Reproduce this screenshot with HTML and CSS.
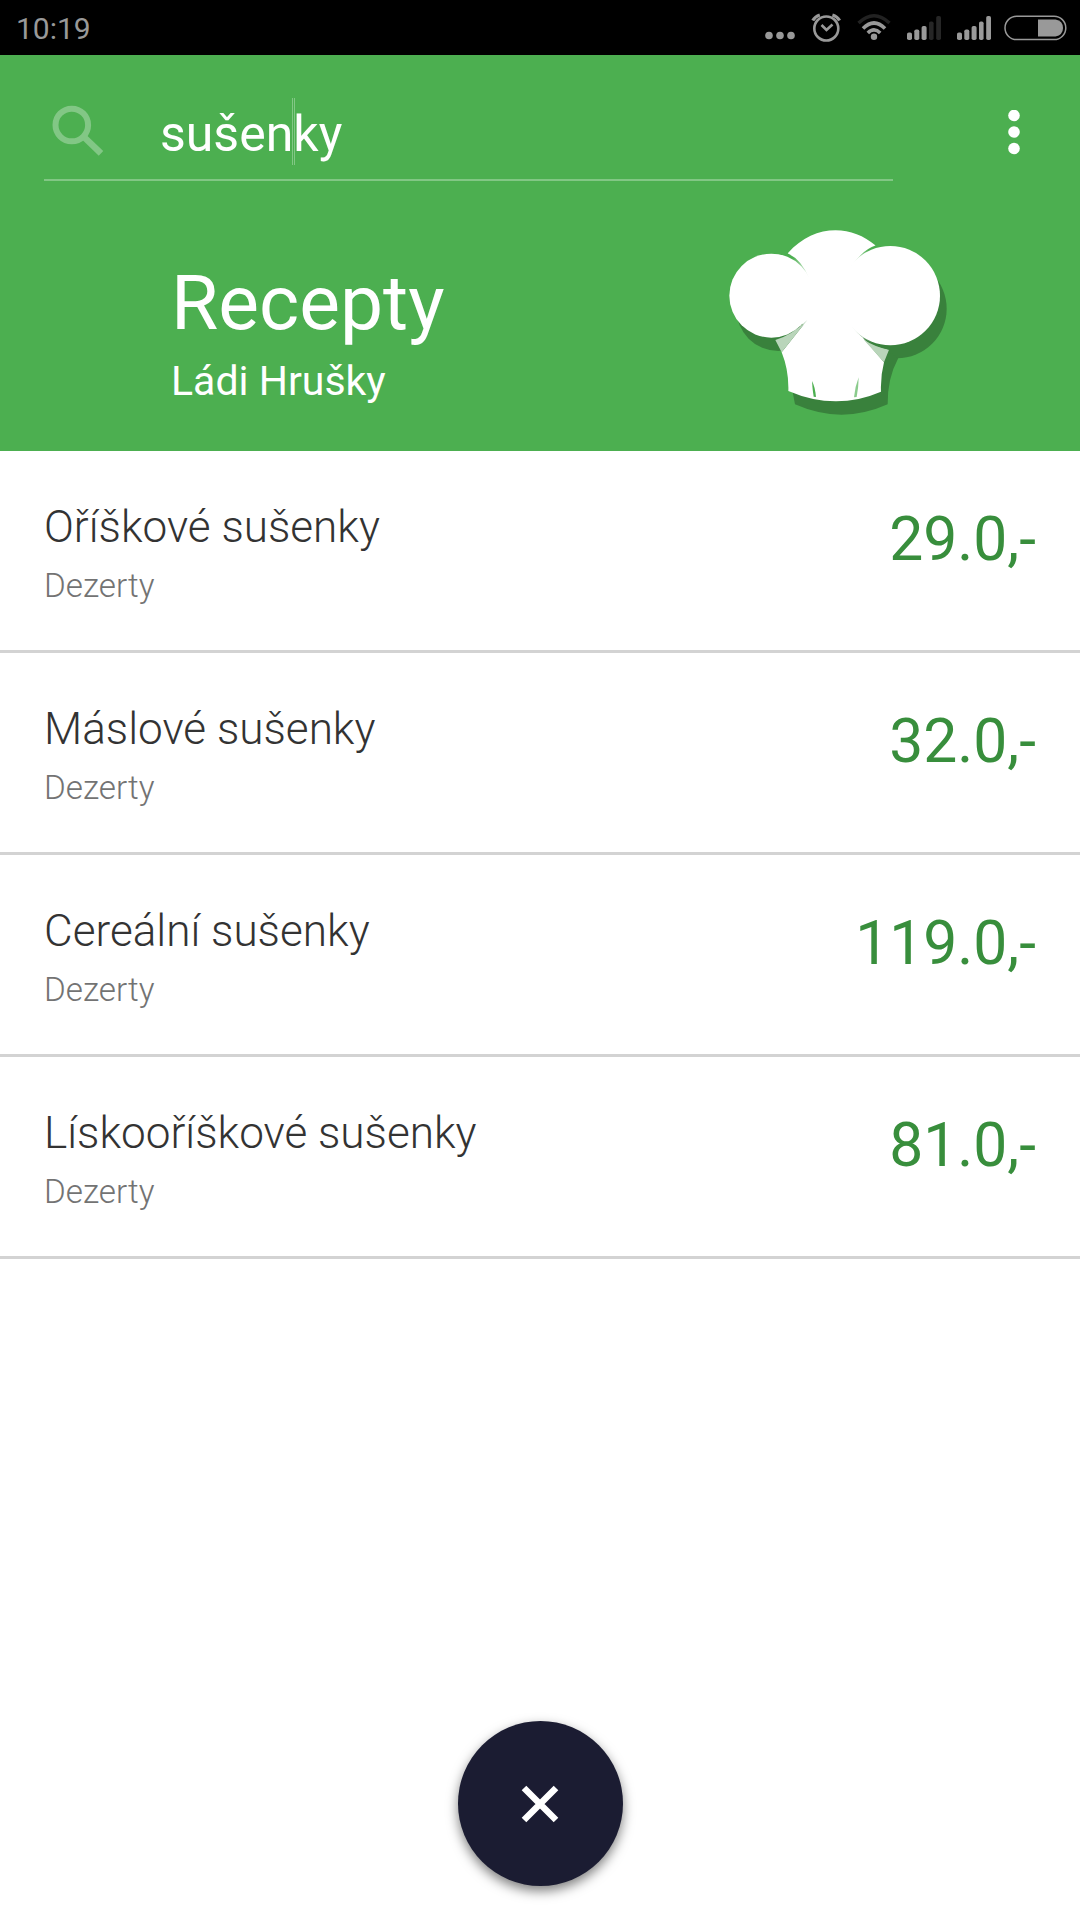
FILE: index.html
```
<!DOCTYPE html>
<html lang="cs">
<head>
    <meta charset="UTF-8">
    <title>Recepty Ládi Hrušky</title>
    <link rel="stylesheet" href="styles.css">
</head>
<body>
<div class="status">
    <span class="time">10:19</span>
    <div class="icons">
        <svg width="30" height="30" viewBox="0 0 30 30">
            <circle cx="4" cy="22.5" r="3.8"/><circle cx="15" cy="22.5" r="3.8"/><circle cx="26" cy="22.5" r="3.8"/>
        </svg>
        <svg width="30" height="30" viewBox="0 0 30 30">
            <circle class="line" cx="15.3" cy="15.5" r="12" stroke-width="2.6"/>
            <path class="line" d="M10.5 12l5 5 6-5.5" stroke-width="2.6"/>
            <path class="line" d="M1.8 7.6Q4 3.5 8.8 2M21.4 2Q26.4 3.5 28.6 7.6" stroke-width="3.2"/>
        </svg>
        <svg width="34" height="30" viewBox="0 0 34 30">
            <path class="line off" d="M1.5 10Q17-4.5 32.5 10" stroke-width="3.4"/>
            <path class="line" d="M6 15.5Q17 4.5 28 15.5M10.8 20Q17 13.8 23.2 20" stroke-width="3.6"/>
            <circle cx="17" cy="23.8" r="3.2"/>
        </svg>
        <svg width="34" height="30" viewBox="0 0 34 30">
            <rect x="0" y="19.5" width="5" height="7.5" rx="1.8"/><rect x="7.3" y="16.5" width="5" height="10.5" rx="1.8"/><rect x="14.6" y="13" width="5" height="14" rx="1.8"/>
            <rect class="dim" x="22" y="8.5" width="4.6" height="18.5" rx="1.8"/><rect class="dim" x="29.2" y="3" width="4.8" height="24" rx="1.8"/>
        </svg>
        <svg width="34" height="30" viewBox="0 0 34 30">
            <rect x="0" y="19.5" width="5" height="7.5" rx="1.8"/><rect x="7.3" y="16.5" width="5" height="10.5" rx="1.8"/><rect x="14.6" y="13" width="5" height="14" rx="1.8"/>
            <rect x="22" y="8.5" width="4.6" height="18.5" rx="1.8"/><rect x="29.2" y="3" width="4.8" height="24" rx="1.8"/>
        </svg>
        <svg class="battery" width="63" height="30" viewBox="0 0 63 30">
            <rect class="line" x="1" y="3.2" width="60.8" height="23.4" rx="11.7" stroke-width="1.5"/>
            <path d="M34 6.5H51.5Q59 8 59 14.9T51.5 23.5H34z"/>
        </svg>
    </div>
</div>
<div class="header">
    <div class="bar">
        <div class="search">
            <svg class="lupa" width="52" height="52" viewBox="0 0 52 52">
                <circle cx="19.8" cy="20" r="16.3" stroke-width="6"/>
                <path d="M33 33L49 48.3" stroke-width="6.5"/>
            </svg>
            <div class="text">sušen<i class="cursor"></i>ky</div>
        </div>
        <svg class="menu" width="12" height="46" viewBox="0 0 12 46">
            <circle cx="6" cy="5.5" r="5.8"/><circle cx="6" cy="22" r="5.8"/><circle cx="6" cy="38.5" r="5.8"/>
        </svg>
    </div>
    <div class="brand">
        <div>
            <h1>Recepty</h1>
            <h2>Ládi Hrušky</h2>
        </div>
        <svg class="hat" width="270" height="220" viewBox="0 0 810 660">
            <defs>
                <linearGradient id="fadeL" x1="0" y1="0" x2="1" y2="1">
                    <stop offset="0.3" stop-color="#4caf50"/><stop offset="1" stop-color="#fff"/>
                </linearGradient>
                <linearGradient id="fadeR" x1="1" y1="0" x2="0" y2="1">
                    <stop offset="0.3" stop-color="#4caf50"/><stop offset="1" stop-color="#fff"/>
                </linearGradient>
                <linearGradient id="fadeB" x1="0" y1="0" x2="1" y2="1">
                    <stop offset="0" stop-color="#fff"/><stop offset="0.6" stop-color="#39813c"/>
                </linearGradient>
            </defs>
            <!-- shadow -->
            <g fill="#39813c">
                <circle cx="235" cy="297" r="126"/>
                <circle cx="591" cy="296" r="149"/>
                <path d="M250 400L285 583Q425 645 563 583Q562 505 595 444L500 380z"/>
            </g>
            <!-- hat -->
            <path fill="#fff" d="M264 129C340 42 453 42 526 106L560 300L490 385L552 457Q541 500 543 545Q407 604 265 543Q267 482 245 427L310 345L230 250z"/>
            <path fill="#b9d5ba" d="M226 390Q276 375 322 330L245 427z"/>
            <path fill="#b9d5ba" d="M567 419L552 457L490 388Q525 412 567 419z"/>
            <path fill="url(#fadeL)" d="M262 130Q303 146 328 206Q295 170 240 150z"/>
            <path fill="url(#fadeR)" d="M528 106Q486 120 452 172Q490 140 545 118z"/>
            <path fill="url(#fadeB)" d="M452 344Q490 400 568 419L590 402L500 360z"/>
            <circle fill="#fff" cx="214" cy="257" r="126"/>
            <circle fill="#fff" cx="571" cy="257" r="149"/>
            <path fill="#4caf50" d="M336 513Q345 530 348 561L341 560Q337 535 336 513z"/>
            <path fill="#8acb8c" d="M476 502Q465 530 462 562L470 561Q476 530 476 502z"/>
        </svg>
    </div>
</div>
<ul class="list">
    <li>
        <div><h3>Oříškové sušenky</h3><p>Dezerty</p></div>
        <span class="price">29.0,-</span>
    </li>
    <li>
        <div><h3>Máslové sušenky</h3><p>Dezerty</p></div>
        <span class="price">32.0,-</span>
    </li>
    <li>
        <div><h3>Cereální sušenky</h3><p>Dezerty</p></div>
        <span class="price">119.0,-</span>
    </li>
    <li>
        <div><h3>Lískooříškové sušenky</h3><p>Dezerty</p></div>
        <span class="price">81.0,-</span>
    </li>
</ul>
<div class="close">
    <svg width="38" height="38" viewBox="0 0 38 38"><path d="M3 3L35 35M35 3L3 35"/></svg>
</div>
</body>
</html>
```
FILE: styles.css
```
*{
    margin: 0;
    padding: 0;
    list-style: none;
    box-sizing: border-box;
}
body{
    width: 1080px;
    height: 1920px;
    overflow: hidden;
    background-color: #fff;
    font-family: Roboto, sans-serif;
}
svg{
    display: block;
    flex: none;
}
.status{
    display: flex;
    justify-content: space-between;
    align-items: center;
    height: 55px;
    padding: 0 13px 0 16px;
    background-color: #000;
    color: #999;
}
.time{
    font-size: 30px;
    line-height: 55px;
    padding-top: 1px;
}
.icons{
    display: flex;
    gap: 16px;
    fill: #999;
}
.icons .battery{
    margin-left: -3px;
}
.icons .line{
    fill: none;
    stroke: #999;
}
.icons .off{
    stroke: #222;
}
.icons .dim{
    fill: #262626;
}
.header{
    height: 396px;
    background-color: #4caf50;
    color: #fff;
}
.bar{
    display: flex;
    height: 126px;
}
.search{
    display: flex;
    width: 849px;
    margin-left: 44px;
    border-bottom: 2px solid #82c785;
}
.lupa{
    margin: 50px 0 0 8px;
    fill: none;
    stroke: #82c785;
}
.text{
    margin: 43px 0 0 56px;
    height: 67px;
    font-size: 50px;
    line-height: 73px;
}
.cursor{
    display: inline-block;
    width: 3px;
    height: 67px;
    margin: 0 -2px 0 -1px;
    vertical-align: top;
    border: solid #82c785;
    border-width: 0 1px;
}
.menu{
    margin: 55px 0 0 115px;
    fill: #fff;
}
.brand{
    display: flex;
    justify-content: space-between;
    padding: 29px 110px 0 171px;
}
.brand h1{
    margin-top: 47px;
    font-size: 76.8px;
    font-weight: 400;
    line-height: 92px;
}
.brand h2{
    font-size: 41px;
    font-weight: 400;
    line-height: 65px;
}
.list li{
    display: flex;
    justify-content: space-between;
    height: 202px;
    padding: 48px 44px 0;
    border-bottom: 3px solid #d3d3d3;
}
.list h3{
    font-size: 44.1px;
    font-weight: 300;
    line-height: 57px;
    color: #333;
}
.list p{
    font-size: 33.2px;
    font-weight: 300;
    line-height: 60px;
    color: #737373;
}
.price{
    font-size: 60.6px;
    line-height: 82px;
    color: #388e3c;
}
.close{
    display: flex;
    justify-content: center;
    align-items: center;
    width: 165px;
    height: 165px;
    margin: 462px auto 0;
    border-radius: 50%;
    background-color: #1b1c32;
    box-shadow: 0 5px 12px rgba(0,0,0,0.5);
}
.close svg{
    margin-right: 1px;
    fill: none;
    stroke: #fff;
    stroke-width: 6.5;
}
```
